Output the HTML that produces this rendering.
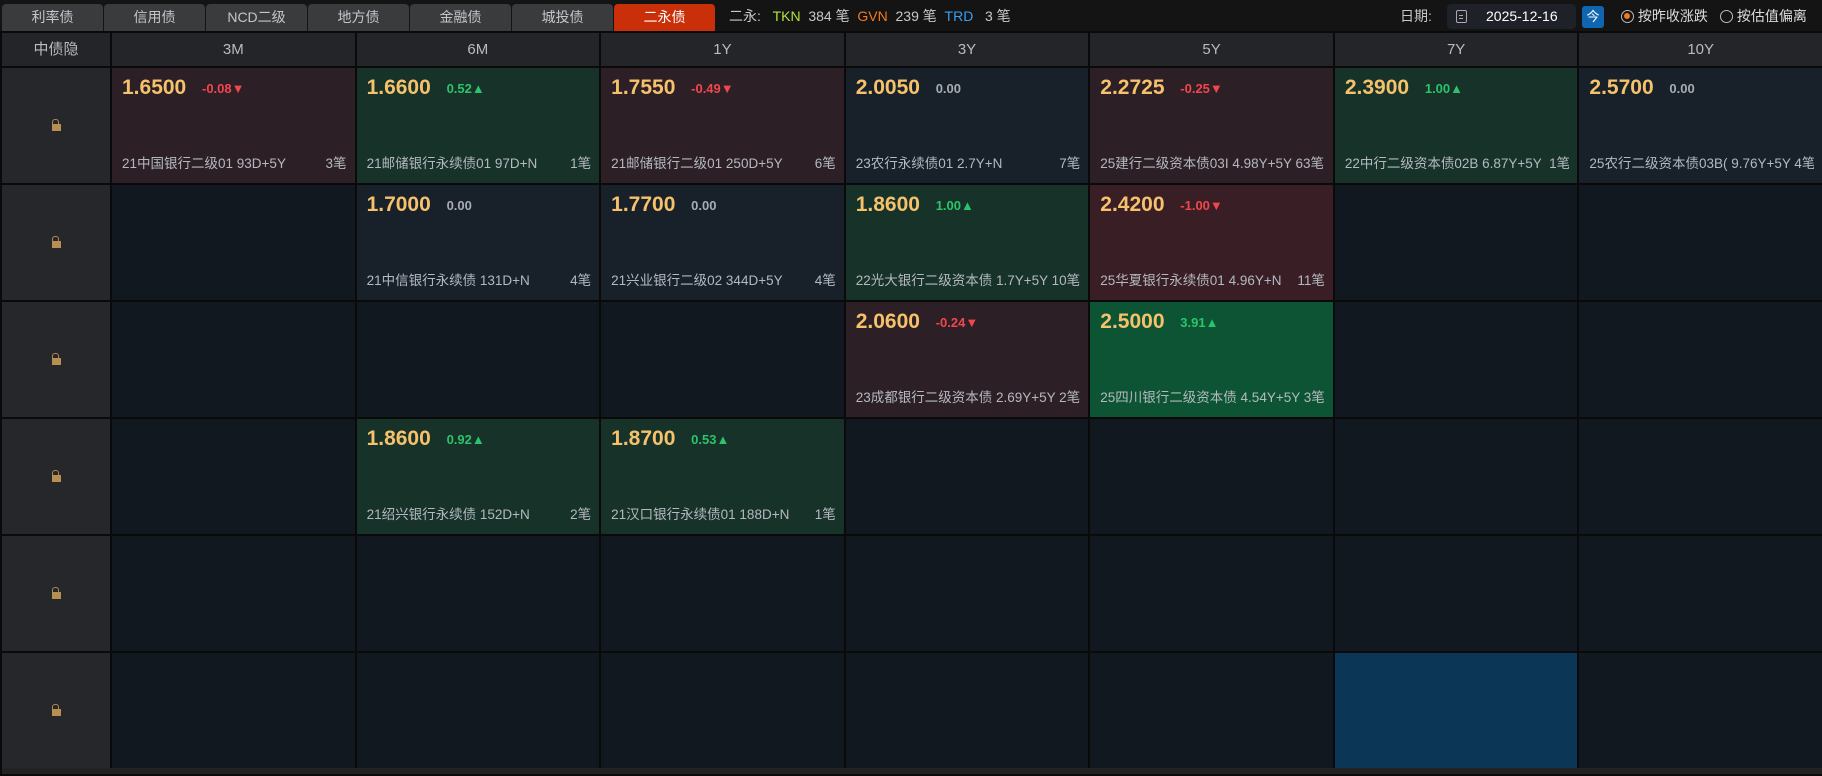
<!DOCTYPE html>
<html><head><meta charset="utf-8"><style>
*{margin:0;padding:0;box-sizing:border-box}
body{width:1822px;height:776px;background:#0a0a0b;font-family:"Liberation Sans","Noto Sans CJK SC",sans-serif;overflow:hidden;position:relative;color:#c8ccd2}
.top{position:absolute;left:0;top:0;width:1822px;height:31px;background:#141414}
.tab{position:absolute;top:4px;height:27px;width:101px;background:#3a3b3d;border-radius:4px 4px 0 0;color:#c4c6ca;font-size:14px;text-align:center;line-height:27px}
.tab.on{background:#c9300a;color:#fff}
.info{position:absolute;top:0;height:33px;line-height:33px;font-size:14px;color:#c8c8c8}
.grid{position:absolute;left:2px;top:33px;width:1820px;display:grid;grid-template-columns:108px repeat(7,1fr);grid-template-rows:33px repeat(6,115px);gap:2px}
.h{background:#232529;color:#b8bbc0;font-size:15px;text-align:center;line-height:33px}
.l{background:#26272a;position:relative}
.l::before{content:"";position:absolute;left:50%;top:50%;margin:-7px 0 0 -4px;width:5px;height:5px;border:1.5px solid #b08a4c;border-bottom:none;border-radius:3px 3px 0 0}
.l::after{content:"";position:absolute;left:50%;top:50%;margin:-2px 0 0 -4.5px;width:9px;height:7px;background:#b88f52}
.c{position:relative;background:#121820}
.r{background:#2d1f26}.g{background:#173228}.n{background:#18202a}.R{background:#3a1e25}.G{background:#0d5434}.B{background:#0b3656}
.v{position:absolute;left:10px;top:8px;font-size:21px;font-weight:bold;color:#f5c26b}
.d{position:absolute;left:90px;top:13px;font-size:13px;font-weight:bold}
.up{color:#2bc46a}.dn{color:#f0474d}.z{color:#a9adb3}
.nm{position:absolute;left:10px;right:8px;bottom:11px;font-size:13.5px;color:#b4b9c0;white-space:nowrap;overflow:hidden}
.nm span{position:absolute;right:0}
.bot{position:absolute;left:2px;top:768px;width:1820px;height:6px;background:#222}
</style></head><body>
<div class="top"></div>
<div class="tab" style="left:2px">利率债</div>
<div class="tab" style="left:104px">信用债</div>
<div class="tab" style="left:206px">NCD二级</div>
<div class="tab" style="left:308px">地方债</div>
<div class="tab" style="left:410px">金融债</div>
<div class="tab" style="left:512px">城投债</div>
<div class="tab on" style="left:614px">二永债</div>
<div class="info" style="left:729px">二永: &nbsp;&nbsp;<span style="color:#b3e33a">TKN</span>&nbsp; 384 笔 &nbsp;<span style="color:#f07b1e">GVN</span>&nbsp; 239 笔 &nbsp;<span style="color:#3a9ef0">TRD</span>&nbsp;&nbsp; 3 笔</div>
<div class="info" style="left:1400px">日期:</div>
<div style="position:absolute;left:1447px;top:4px;width:129px;height:25px;background:#1e2127;border-radius:4px;color:#fff;font-size:14px;line-height:25px;padding-left:39px">2025-12-16<span style="position:absolute;left:9px;top:6px;width:11px;height:13px;border:1.5px solid #aaa;border-radius:2px"><span style="position:absolute;left:2px;top:4px;width:4px;height:1px;background:#aaa"></span><span style="position:absolute;left:2px;top:7px;width:4px;height:1px;background:#aaa"></span></span></div>
<div style="position:absolute;left:1582px;top:6px;width:22px;height:22px;background:#0f65b0;border-radius:3px;color:#fff;font-size:13px;text-align:center;line-height:22px">今</div>
<div class="info" style="left:1621px;color:#ddd"><span style="display:inline-block;width:13px;height:13px;border:1.5px solid #bbb;border-radius:50%;vertical-align:-2px;position:relative"><span style="position:absolute;left:2px;top:2px;width:6px;height:6px;background:#f07b1e;border-radius:50%"></span></span> 按昨收涨跌</div>
<div class="info" style="left:1720px;color:#ddd"><span style="display:inline-block;width:13px;height:13px;border:1.5px solid #bbb;border-radius:50%;vertical-align:-2px"></span> 按估值偏离</div>
<div class="grid">
<div class="h">中债隐</div><div class="h">3M</div><div class="h">6M</div><div class="h">1Y</div><div class="h">3Y</div><div class="h">5Y</div><div class="h">7Y</div><div class="h">10Y</div>

<div class="l"></div>
<div class="c r"><div class="v">1.6500</div><div class="d dn">-0.08▼</div><div class="nm">21中国银行二级01 93D+5Y<span>3笔</span></div></div>
<div class="c g"><div class="v">1.6600</div><div class="d up">0.52▲</div><div class="nm">21邮储银行永续债01 97D+N<span>1笔</span></div></div>
<div class="c r"><div class="v">1.7550</div><div class="d dn">-0.49▼</div><div class="nm">21邮储银行二级01 250D+5Y<span>6笔</span></div></div>
<div class="c n"><div class="v">2.0050</div><div class="d z">0.00</div><div class="nm">23农行永续债01 2.7Y+N<span>7笔</span></div></div>
<div class="c r"><div class="v">2.2725</div><div class="d dn">-0.25▼</div><div class="nm">25建行二级资本债03I 4.98Y+5Y 63笔</div></div>
<div class="c g"><div class="v">2.3900</div><div class="d up">1.00▲</div><div class="nm">22中行二级资本债02B 6.87Y+5Y &nbsp;1笔</div></div>
<div class="c n"><div class="v">2.5700</div><div class="d z">0.00</div><div class="nm">25农行二级资本债03B( 9.76Y+5Y 4笔</div></div>

<div class="l"></div>
<div class="c"></div>
<div class="c n"><div class="v">1.7000</div><div class="d z">0.00</div><div class="nm">21中信银行永续债 131D+N<span>4笔</span></div></div>
<div class="c n"><div class="v">1.7700</div><div class="d z">0.00</div><div class="nm">21兴业银行二级02 344D+5Y<span>4笔</span></div></div>
<div class="c g"><div class="v">1.8600</div><div class="d up">1.00▲</div><div class="nm">22光大银行二级资本债 1.7Y+5Y 10笔</div></div>
<div class="c R"><div class="v">2.4200</div><div class="d dn">-1.00▼</div><div class="nm">25华夏银行永续债01 4.96Y+N<span>11笔</span></div></div>
<div class="c"></div><div class="c"></div>

<div class="l"></div>
<div class="c"></div><div class="c"></div><div class="c"></div>
<div class="c r"><div class="v">2.0600</div><div class="d dn">-0.24▼</div><div class="nm">23成都银行二级资本债 2.69Y+5Y 2笔</div></div>
<div class="c G"><div class="v">2.5000</div><div class="d up">3.91▲</div><div class="nm">25四川银行二级资本债 4.54Y+5Y 3笔</div></div>
<div class="c"></div><div class="c"></div>

<div class="l"></div>
<div class="c"></div>
<div class="c g"><div class="v">1.8600</div><div class="d up">0.92▲</div><div class="nm">21绍兴银行永续债 152D+N<span>2笔</span></div></div>
<div class="c g"><div class="v">1.8700</div><div class="d up">0.53▲</div><div class="nm">21汉口银行永续债01 188D+N<span>1笔</span></div></div>
<div class="c"></div><div class="c"></div><div class="c"></div><div class="c"></div>

<div class="l"></div>
<div class="c"></div><div class="c"></div><div class="c"></div><div class="c"></div><div class="c"></div><div class="c"></div><div class="c"></div>

<div class="l"></div>
<div class="c"></div><div class="c"></div><div class="c"></div><div class="c"></div><div class="c"></div><div class="c B"></div><div class="c"></div>
</div>
<div class="bot"></div>
</body></html>
